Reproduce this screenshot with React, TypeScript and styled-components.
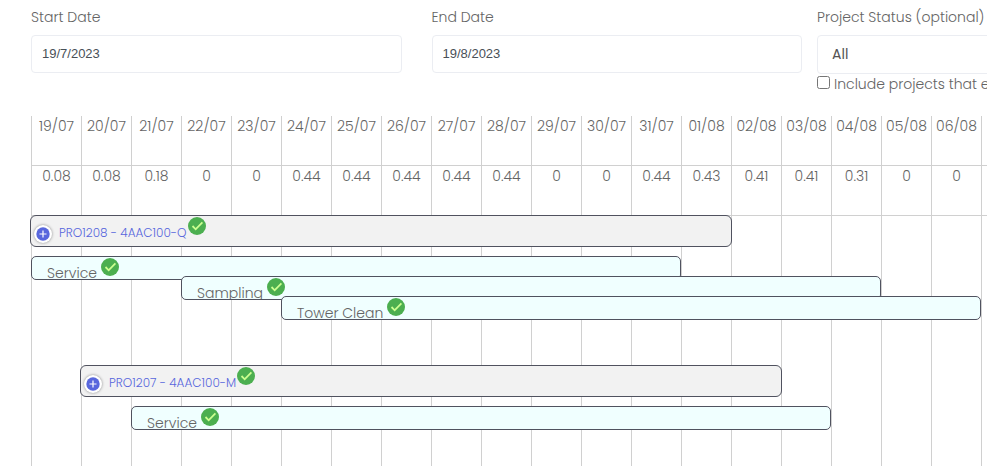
import React from "react";
import styled, { createGlobalStyle } from "styled-components";

const GlobalStyle = createGlobalStyle`
  *, *::before, *::after { box-sizing: border-box; }
  body {
    margin: 0;
    background: #fff;
    color: #646464;
    font-family: Poppins, Inter, sans-serif;
    font-size: 14px;
    font-weight: 300;
    line-height: 20px;
  }
`;

const DAY = 50;

type Task = { name: string; start: number; days: number };
type Project = Task & { tasks: Task[] };

const days: [string, string][] = [
  ["19/07", "0.08"],
  ["20/07", "0.08"],
  ["21/07", "0.18"],
  ["22/07", "0"],
  ["23/07", "0"],
  ["24/07", "0.44"],
  ["25/07", "0.44"],
  ["26/07", "0.44"],
  ["27/07", "0.44"],
  ["28/07", "0.44"],
  ["29/07", "0"],
  ["30/07", "0"],
  ["31/07", "0.44"],
  ["01/08", "0.43"],
  ["02/08", "0.41"],
  ["03/08", "0.41"],
  ["04/08", "0.31"],
  ["05/08", "0"],
  ["06/08", "0"],
  ["", ""],
];

const projects: Project[] = [
  {
    name: "PRO1208 - 4AAC100-Q",
    start: 1,
    days: 14,
    tasks: [
      { name: "Service", start: 1, days: 13 },
      { name: "Sampling", start: 4, days: 14 },
      { name: "Tower Clean", start: 6, days: 14 },
    ],
  },
  {
    name: "PRO1207 - 4AAC100-M",
    start: 2,
    days: 14,
    tasks: [{ name: "Service", start: 3, days: 14 }],
  },
];

const Page = styled.main`
  display: flex;
  flex-direction: column;
  height: 100vh;
  padding: 7px 9px 1px 30px;
  overflow: hidden;
`;

const Filters = styled.form`
  display: flex;
  gap: 15px;
  height: 109px;
  flex: none;
  padding-left: 1px;
`;

const DateFields = styled.div`
  display: grid;
  grid-template-columns: 1fr 1fr;
  gap: 30px;
  flex: 1;
  min-width: 0;
`;

const Field = styled.div`
  display: flex;
  flex-direction: column;
  gap: 8px;
  min-width: 0;
`;

const StatusField = styled(Field)`
  flex: 0 0 170px;
  overflow: hidden;
  white-space: nowrap;
`;

const DateInput = styled.input`
  width: 100%;
  height: 38px;
  padding: 0 10px 2px;
  border: 1px solid #ebedf2;
  border-radius: 4px;
  background: #fff;
  color: #495057;
  font: 400 13px "Liberation Sans", Arial, sans-serif;
`;

const StatusSelect = styled.select`
  width: 370px;
  height: 39px;
  padding: 0 14px 1px;
  border: 1px solid #ebedf2;
  border-radius: 4px;
  appearance: none;
  background: #fff;
  color: #555;
  font: inherit;
  font-weight: 400;
`;

const CheckLabel = styled.label`
  display: flex;
  gap: 4px;
  margin-top: -8px;

  input {
    flex: none;
    width: 13px;
    height: 13px;
    margin: 2px 0 0;
  }
`;

const Schedule = styled.section`
  display: flex;
  flex-direction: column;
  flex: 1;
  min-height: 0;
  overflow: hidden;
`;

const Days = styled.table`
  flex: none;
  width: ${DAY * 20}px;
  margin-left: 1px;
  table-layout: fixed;
  border-spacing: 0;

  th, td {
    height: 50px;
    padding: 0;
    border-left: 1px solid #d0d0d0;
    font-weight: 300;
    text-align: center;
    vertical-align: top;
  }

  th { height: 49px; }
  td { border-top: 1px solid #d0d0d0; }
`;

const Chart = styled.div`
  flex: 1 0 auto;
  width: ${DAY * 20}px;
  margin-left: 1px;
  background:
    linear-gradient(#d0d0d0, #d0d0d0) top / 100% 1px no-repeat,
    repeating-linear-gradient(to right, #d0d0d0 0 1px, transparent 1px ${DAY}px);
`;

const ProjectRow = styled.section`
  min-height: 150px;
`;

const Lane = styled.div`
  display: grid;
  grid-template-columns: repeat(20, ${DAY}px);
`;

const Bar = styled.div<{ $start: number; $days: number }>`
  grid-column: ${(p) => p.$start} / span ${(p) => p.$days};
  display: flex;
  border: 1px solid #50525f;
  white-space: nowrap;
`;

const ProjectBar = styled(Bar)`
  height: 32px;
  margin: 0 -1px 9px;
  padding: 1px 3px;
  border-radius: 6px;
  background: #f2f2f2;
`;

const TaskBar = styled(Bar)`
  height: 24px;
  margin-bottom: -4px;
  padding: 1px 15px;
  gap: 4px;
  border-radius: 5px;
  background: #f0ffff;
  overflow: hidden;
`;

const TaskName = styled.span`
  padding-top: 5px;
`;

const ExpandButton = styled.button`
  flex: none;
  display: grid;
  place-items: center;
  width: 18px;
  height: 18px;
  margin: 8px 7px 0 0;
  padding: 0;
  border: 0;
  border-radius: 50%;
  background: #fff;
  box-shadow: 0 0 3px #888;
`;

const ProjectLink = styled.a`
  margin-right: 1px;
  padding-top: 6px;
  color: #5867dd;
  font-size: 12px;
  text-decoration: none;
`;

const Icon = styled.svg`
  flex: none;
  display: block;
`;

const DoneIcon = () => (
  <Icon width="18" height="18" viewBox="4 4 40 40" aria-hidden="true">
    <circle cx="24" cy="24" r="20" fill="#4caf50" />
    <path
      d="M34.6 14.6 21 28.2l-5.6-5.6-2.8 2.8 8.4 8.4 16.4-16.4z"
      fill="#ccff90"
    />
  </Icon>
);

const PlusIcon = () => (
  <Icon width="14" height="14" viewBox="0 0 14 14" aria-hidden="true">
    <circle cx="7" cy="7" r="6.7" fill="#5867dd" />
    <path d="M7 3.5v7M3.5 7h7" stroke="#fff" strokeWidth="1.2" />
  </Icon>
);

export default function App() {
  return (
    <>
      <GlobalStyle />
      <Page>
        <Filters>
          <DateFields>
            <Field>
              <label htmlFor="start">Start Date</label>
              <DateInput id="start" defaultValue="19/7/2023" />
            </Field>
            <Field>
              <label htmlFor="end">End Date</label>
              <DateInput id="end" defaultValue="19/8/2023" />
            </Field>
          </DateFields>
          <StatusField>
            <label htmlFor="status">Project Status (optional)</label>
            <StatusSelect id="status">
              <option>All</option>
            </StatusSelect>
            <CheckLabel>
              <input type="checkbox" />
              <span>Include projects that e</span>
            </CheckLabel>
          </StatusField>
        </Filters>

        <Schedule>
          <Days>
            <thead>
              <tr>
                {days.map(([date], i) => (
                  <th key={i} scope="col">{date}</th>
                ))}
              </tr>
            </thead>
            <tbody>
              <tr>
                {days.map(([, load], i) => (
                  <td key={i}>{load}</td>
                ))}
              </tr>
            </tbody>
          </Days>

          <Chart>
            {projects.map((project) => (
              <ProjectRow key={project.name}>
                <Lane>
                  <ProjectBar $start={project.start} $days={project.days}>
                    <ExpandButton type="button" aria-label="Expand project">
                      <PlusIcon />
                    </ExpandButton>
                    <ProjectLink href="#">{project.name}</ProjectLink>
                    <DoneIcon />
                  </ProjectBar>
                </Lane>
                {project.tasks.map((task) => (
                  <Lane key={task.name}>
                    <TaskBar $start={task.start} $days={task.days}>
                      <TaskName>{task.name}</TaskName>
                      <DoneIcon />
                    </TaskBar>
                  </Lane>
                ))}
              </ProjectRow>
            ))}
          </Chart>
        </Schedule>
      </Page>
    </>
  );
}
